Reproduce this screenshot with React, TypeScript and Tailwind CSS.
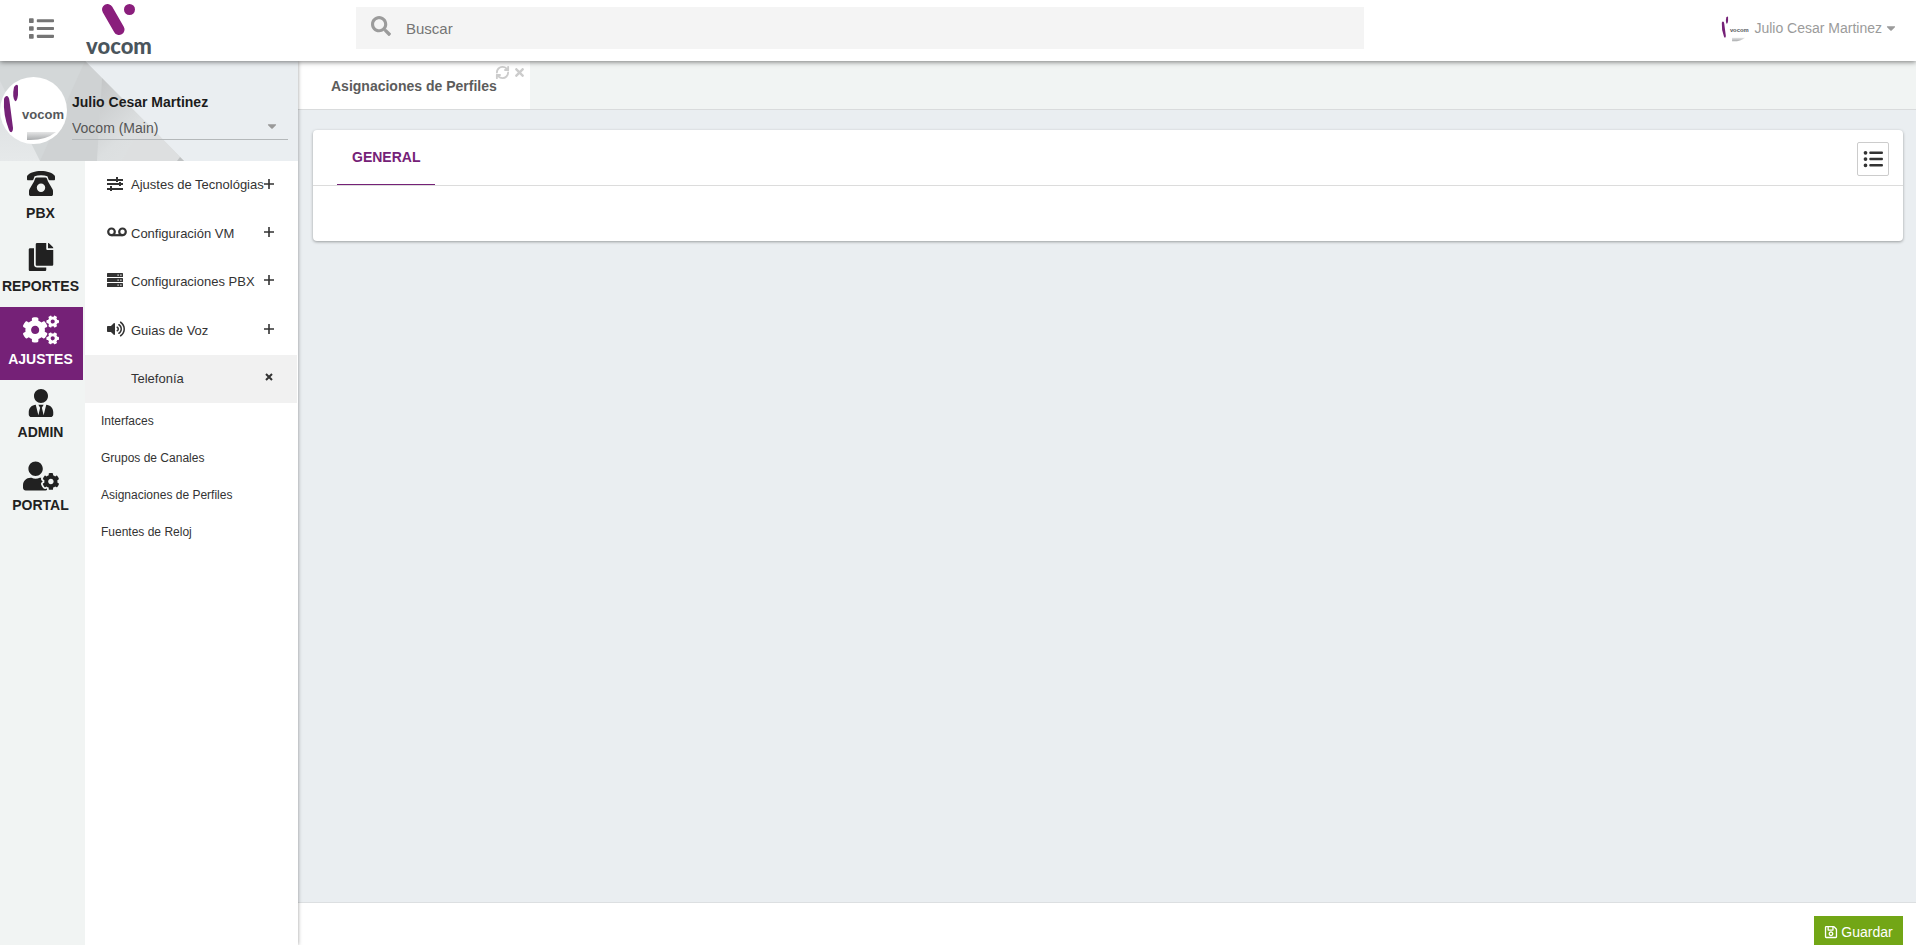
import type { ReactNode } from "react";
import { FaCaretDown, FaCogs, FaCopy, FaList, FaRegSave, FaSearch, FaTimes, FaUserCog, FaUserTie, FaVolumeUp } from "react-icons/fa";
import { FaListUl } from "react-icons/fa6";
import { RefreshCw } from "lucide-react";

interface SectionLink {
  label: string;
  icon: ReactNode;
  active?: boolean;
}

interface MenuEntry {
  label: string;
  icon?: ReactNode;
  open?: boolean;
}

function RotaryPhone() {
  return (
    <svg viewBox="0 0 28 26" className="w-7 h-[26px]" fill="currentColor" aria-hidden="true">
      <path d="M14 0C8 0 3 1.600 .4 4.500 0 5 0 5.500 0 6v2.200c0 .6.400 1 1 1h4.400c.5 0 .8-.2 1-.7l1.200-3.300C9.500 4.600 11.600 4.300 14 4.300s4.500.3 6.400.9l1.200 3.300c.2.5.5.7 1 .7H27c.6 0 1-.4 1-1V6c0-.5 0-1-.4-1.500C25 1.600 20 0 14 0Z" />
      <path fillRule="evenodd" d="M9.500 6.500h9c.7 0 1.100.3 1.400.9l1.100 3.100 4.400 7.500c.4.7.6 1.300.6 2v3.200c0 1.100-.7 1.800-1.800 1.800H3.800C2.700 25 2 24.300 2 23.200V20c0-.7.200-1.300.6-2L7 10.500l1.100-3.100c.3-.6.700-.9 1.400-.9ZM14 12.500a4.200 4.200 0 1 0 0 8.400 4.200 4.200 0 0 0 0-8.400Z" />
    </svg>
  );
}

function Sliders() {
  return (
    <svg viewBox="0 0 16 14" className="w-4 h-3.5" fill="currentColor" aria-hidden="true">
      <path d="M0 2h16v2H0zM0 6h16v2H0zM0 11h16v2H0zM9 0h2v5H9zM12 5h2v4h-2zM3 9h2v5H3z" />
    </svg>
  );
}

function Voicemail() {
  return (
    <svg viewBox="0 0 20 10" className="w-5 h-2.5" fill="none" stroke="currentColor" strokeWidth="2.2" aria-hidden="true">
      <circle cx="4.500" cy="4.800" r="3.300" />
      <circle cx="15.500" cy="4.800" r="3.300" />
      <path d="M4.500 8.200h11" />
    </svg>
  );
}

function Server() {
  return (
    <svg viewBox="0 0 16 14" className="w-4 h-3.5" fill="currentColor" aria-hidden="true">
      <rect width="16" height="4" rx=".6" />
      <rect y="5" width="16" height="4" rx=".6" />
      <rect y="10" width="16" height="4" rx=".6" />
      <path d="M10.500 1.500h1.200v1.200h-1.200zM13.300 1.500h1.200v1.200h-1.200zM10.500 6.500h1.200v1.200h-1.200zM13.300 6.500h1.200v1.200h-1.200zM10.500 11.500h1.200v1.200h-1.200zM13.300 11.500h1.200v1.200h-1.200z" fill="#fff" />
    </svg>
  );
}

function ToggleMark({ open }: { open?: boolean }) {
  return (
    <svg viewBox="0 0 10 10" className="size-2.5" fill="none" stroke="currentColor" aria-hidden="true">
      {open ? <path d="m2 2 6 6M8 2 2 8" strokeWidth="2" /> : <path d="M5 0v10M0 5h10" strokeWidth="1.600" />}
    </svg>
  );
}

function Logo() {
  return (
    <svg viewBox="0 0 76 61" className="w-[76px] h-[61px]" role="img" aria-label="vocom">
      <path d="M26.500 9.500 38 29.500" stroke="#8a1e7c" strokeWidth="11" strokeLinecap="round" />
      <circle cx="48.500" cy="9.500" r="5.500" fill="#8a1e7c" />
      <text x="38" y="54" textAnchor="middle" fontSize="22" fontWeight="900" fill="#4a555c" fontFamily="Lato, sans-serif">vocom</text>
    </svg>
  );
}

function Avatar({ className }: { className: string }) {
  return (
    <svg viewBox="0 0 67 67" className={className} aria-hidden="true">
      <defs>
        <linearGradient id="haze" x1="0" y1="0" x2="0" y2="1">
          <stop offset="0" stopColor="#a9abad" stopOpacity="0.3" />
          <stop offset="1" stopColor="#a9abad" />
        </linearGradient>
      </defs>
      <circle cx="33.500" cy="33.500" r="33.500" fill="#fff" />
      <path d="M4 22c2-5 5-3 5.500 2L13 51c0 4-2 6-4 2Q3 38 4 22Z" fill="#752177" />
      <path d="M14 10q3-4 4-1v9q-1 7-3 6-3-4-1-14Z" fill="#752177" />
      <text x="43" y="42" textAnchor="middle" fontSize="13" fontWeight="700" fill="#55585b" fontFamily="'Liberation Sans Narrow', 'Liberation Sans', sans-serif">vocom</text>
      <path d="M27 55h29q-11 9-29 8Z" fill="url(#haze)" />
    </svg>
  );
}

const sections: SectionLink[] = [
  { label: "PBX", icon: <RotaryPhone /> },
  { label: "REPORTES", icon: <FaCopy size={28} /> },
  { label: "AJUSTES", icon: <FaCogs size={36} />, active: true },
  { label: "ADMIN", icon: <FaUserTie size={28} /> },
  { label: "PORTAL", icon: <FaUserCog size={36} /> },
];

const entries: MenuEntry[] = [
  { label: "Ajustes de Tecnológias", icon: <Sliders /> },
  { label: "Configuración VM", icon: <Voicemail /> },
  { label: "Configuraciones PBX", icon: <Server /> },
  { label: "Guias de Voz", icon: <FaVolumeUp size={18} /> },
  { label: "Telefonía", open: true },
];

const subEntries = ["Interfaces", "Grupos de Canales", "Asignaciones de Perfiles", "Fuentes de Reloj"];

function Header() {
  return (
    <header className="relative z-20 flex h-[61px] shrink-0 items-center bg-white shadow-[0_1px_5px_rgba(0,0,0,0.5)]">
      <button type="button" aria-label="Menú" className="ml-[29px] mb-[5px] text-[#757575]">
        <FaList size={25} />
      </button>
      <a href="#inicio" className="ml-[27px]">
        <Logo />
      </a>
      <label className="ml-[199px] mb-[5px] flex h-[42px] w-[1008px] items-center bg-[#f4f4f4] pl-[15px]">
        <FaSearch size={20} className="mb-1 text-[#9b9b9b]" />
        <input
          type="search"
          aria-label="Buscar"
          placeholder="Buscar"
          className="ml-[15px] flex-1 bg-transparent pt-0.5 text-[15px] outline-none placeholder:text-[#757575]"
        />
      </label>
      <button type="button" className="mr-[18px] mb-[5px] ml-auto flex items-center text-sm text-[#9b9b9b]">
        <Avatar className="mr-1 size-[30px]" />
        Julio Cesar Martinez
        <FaCaretDown size={14} className="ml-0.5" />
      </button>
    </header>
  );
}

function UserPanel() {
  return (
    <div className="relative flex h-[100px] items-center bg-[#eaeef1]">
      <svg viewBox="0 0 184 100" className="absolute top-0 left-0 h-[100px] w-[184px]" aria-hidden="true">
        <defs>
          <linearGradient id="fold" x1="0" y1="0" x2="1" y2="1">
            <stop offset="0" stopColor="#c3c5c6" />
            <stop offset="0.500" stopColor="#dcdfe0" />
            <stop offset="1" stopColor="#e2e4e5" />
          </linearGradient>
          <linearGradient id="corner" x1="0" y1="0" x2="0" y2="1">
            <stop offset="0" stopColor="#d9dcde" />
            <stop offset="1" stopColor="#e6e9ea" />
          </linearGradient>
        </defs>
        <path d="M0 0h85l99 100H0Z" fill="#d3d7d8" />
        <path d="m85 0 17 17-5 83H40Z" fill="#cfd2d3" />
        <path d="m102 17 82 83H97Z" fill="url(#fold)" />
        <path d="m145 60 39 40h-62Z" fill="#dddfe0" />
        <path d="m180 96 4 4h-7Z" fill="#bfc2c3" />
        <path d="m0 20 40 80H0Z" fill="url(#corner)" />
      </svg>
      <Avatar className="relative mb-0.5 size-[67px]" />
      <div className="relative ml-[5px] mr-2.5 mt-[9px] flex-1">
        <p className="mb-[5px] text-sm font-bold text-[#1c1c1c]">Julio Cesar Martinez</p>
        <div className="relative border-b border-[#b4b8ba]">
          <select aria-label="Empresa" className="block h-[22px] w-full appearance-none bg-transparent text-sm text-[#555]">
            <option>Vocom (Main)</option>
          </select>
          <FaCaretDown size={14} className="pointer-events-none absolute top-0.5 right-[9px] text-[#999]" />
        </div>
      </div>
    </div>
  );
}

function Sidebar() {
  return (
    <aside className="relative z-10 flex w-[298px] shrink-0 flex-col bg-white shadow-[0_0_4px_rgba(0,0,0,0.4)]">
      <UserPanel />
      <div className="flex flex-1">
        <nav className="w-[85px] bg-[#f1f4f3]">
          {sections.map((section) => (
            <a
              key={section.label}
              href={`#${section.label.toLowerCase()}`}
              className={`flex h-[73px] w-[83px] flex-col items-center pr-0.5 text-sm font-bold ${
                section.active ? "bg-[#752177] text-white" : "text-[#212121]"
              }`}
            >
              <span className="mt-[3px] flex h-[39px] items-center">{section.icon}</span>
              {section.label}
            </a>
          ))}
        </nav>
        <div className="flex-1 text-[#333]">
          <div className="grid h-[242px] grid-rows-5">
            {entries.map((entry) => (
              <button
                key={entry.label}
                type="button"
                className={`flex items-center whitespace-nowrap pl-[22px] text-[13px] ${
                  entry.open ? "mr-px bg-[#f1f1f1] pr-[23px]" : "pr-6"
                }`}
              >
                <span className="mb-[3px] flex w-6 shrink-0">{entry.icon}</span>
                {entry.label}
                <span className="mb-[3px] ml-auto">
                  <ToggleMark open={entry.open} />
                </span>
              </button>
            ))}
          </div>
          <ul>
            {subEntries.map((label) => (
              <li key={label}>
                <a href="#telefonia" className="flex h-[37px] items-center pb-0.5 pl-4 text-xs">
                  {label}
                </a>
              </li>
            ))}
          </ul>
        </div>
      </div>
    </aside>
  );
}

export default function App() {
  return (
    <div className="flex h-screen flex-col overflow-hidden bg-[#eaeef1] font-['Liberation_Sans',Arial,sans-serif]">
      <Header />
      <div className="flex min-h-0 flex-1">
        <Sidebar />
        <main className="flex min-w-0 flex-1 flex-col">
          <div className="flex h-[49px] border-b border-[#d9dbdc] bg-[#f1f4f3]">
            <div className="flex w-[232px] items-start bg-white pl-[33px]">
              <button type="button" className="mt-[15px] text-sm font-bold whitespace-nowrap text-[#5c5c5c]">
                Asignaciones de Perfiles
              </button>
              <div className="mt-1 -ml-0.5 flex items-center gap-[3px] text-[#ccc]">
                <button type="button" aria-label="Recargar">
                  <RefreshCw size={15} strokeWidth={3} />
                </button>
                <button type="button" aria-label="Cerrar">
                  <FaTimes size={13} />
                </button>
              </div>
            </div>
          </div>
          <section className="mx-[13px] mt-5 mb-auto ml-[15px] rounded-sm bg-white shadow-[0_1px_3px_rgba(0,0,0,0.35)]">
            <div className="flex h-14 items-center justify-between border-b border-[#dcdcdc] pr-3.5 pl-6">
              <button
                type="button"
                className="h-[55px] self-start border-b border-[#752177] px-[15px] text-sm font-bold text-[#752177]"
              >
                GENERAL
              </button>
              <button
                type="button"
                aria-label="Ver lista"
                className="mt-0.5 flex h-[34px] w-8 items-center justify-center rounded-xs border border-[#ccc] text-[#333]"
              >
                <FaListUl size={20} />
              </button>
            </div>
            <div className="h-[55px]" />
          </section>
          <footer className="flex h-[43px] items-start justify-end border-t border-[#dcdfe1] bg-white pt-[13px] pr-[13px]">
            <button type="button" className="flex h-8 w-[89px] shrink-0 items-center justify-center gap-[3px] bg-[#72a616] text-sm text-white">
              <FaRegSave size={14} />
              Guardar
            </button>
          </footer>
        </main>
      </div>
    </div>
  );
}
